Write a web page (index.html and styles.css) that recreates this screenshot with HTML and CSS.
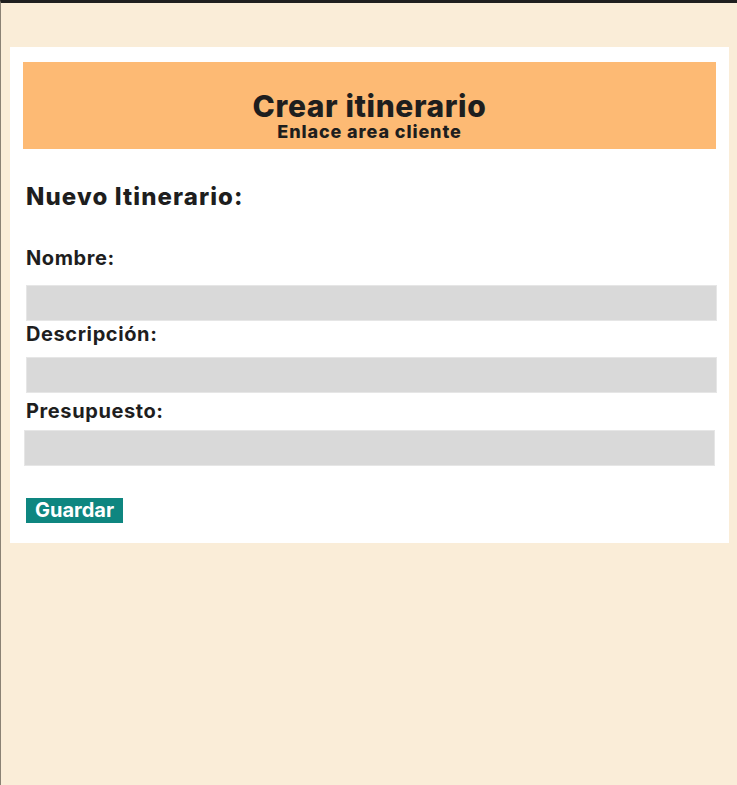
FILE: index.html
```html
<!DOCTYPE html>
<html lang="es">
<head>
<meta charset="utf-8">
<title>Crear itinerario</title>
<link rel="stylesheet" href="styles.css">
</head>
<body>
<div class="page">
  <main class="card">
    <header class="hero">
      <h1 class="hero-title">Crear itinerario</h1>
      <a class="hero-link" href="#">Enlace area cliente</a>
    </header>
    <form class="form">
      <h2 class="form-title">Nuevo Itinerario:</h2>
      <label class="label label-first" for="nombre">Nombre:</label>
      <input class="field field-first" id="nombre" type="text">
      <label class="label label-second" for="descripcion">Descripción:</label>
      <input class="field field-second" id="descripcion" type="text">
      <label class="label label-third" for="presupuesto">Presupuesto:</label>
      <input class="field field-third" id="presupuesto" type="number">
      <button class="btn" type="button">Guardar</button>
    </form>
  </main>
</div>
</body>
</html>
```
FILE: styles.css
```css
* { box-sizing: border-box; }
html, body { margin: 0; padding: 0; }
body {
  font-family: "Inter", "Noto Sans", sans-serif;
  color: #1e1e1e;
}
.page {
  min-height: 785px;
  background: #faedd8;
  border-top: 3px solid #1f1f1f;
  border-left: 1px solid #8a8275;
  padding: 44px 8px 0 9px;
}
.card {
  width: 719px;
  background: #ffffff;
  padding: 15px 13px 20px 13px;
}
.hero {
  height: 87px;
  background: #fdba74;
  text-align: center;
  padding-top: 30px;
}
.hero-title {
  margin: 0;
  font-size: 30px;
  line-height: 28px;
  font-weight: 800;
  letter-spacing: 0.6px;
}
.hero-link {
  display: block;
  margin-top: 3px;
  font-size: 18px;
  line-height: 17px;
  font-weight: 800;
  letter-spacing: 0.9px;
  color: #1e1e1e;
  text-decoration: none;
}
.form {
  display: flex;
  flex-direction: column;
  align-items: flex-start;
  padding-left: 3px;
}
.form-title {
  margin: 36px 0 0 0;
  font-size: 24px;
  line-height: 24px;
  font-weight: 800;
  letter-spacing: 1.1px;
}
.label {
  display: block;
  font-size: 20px;
  line-height: 20px;
  font-weight: 700;
  letter-spacing: 0.6px;
}
.label-first { margin-top: 39px; }
.label-second { margin-top: 3px; }
.label-third { margin-top: 8px; }
.field {
  width: 691px;
  height: 36px;
  margin: 0;
  padding: 0 8px;
  background: #d9d9d9;
  border: 1px solid #e6e6e6;
  font: inherit;
}
.field-first { margin-top: 17px; }
.field-second { margin-top: 13px; }
.field-third { margin-top: 9px; margin-left: -2px; }
.btn {
  margin-top: 32px;
  height: 25px;
  padding: 0 9px;
  border: none;
  background: #0e8680;
  color: #ffffff;
  font-family: inherit;
  font-size: 20px;
  line-height: 25px;
  font-weight: 700;
  cursor: pointer;
}
```
